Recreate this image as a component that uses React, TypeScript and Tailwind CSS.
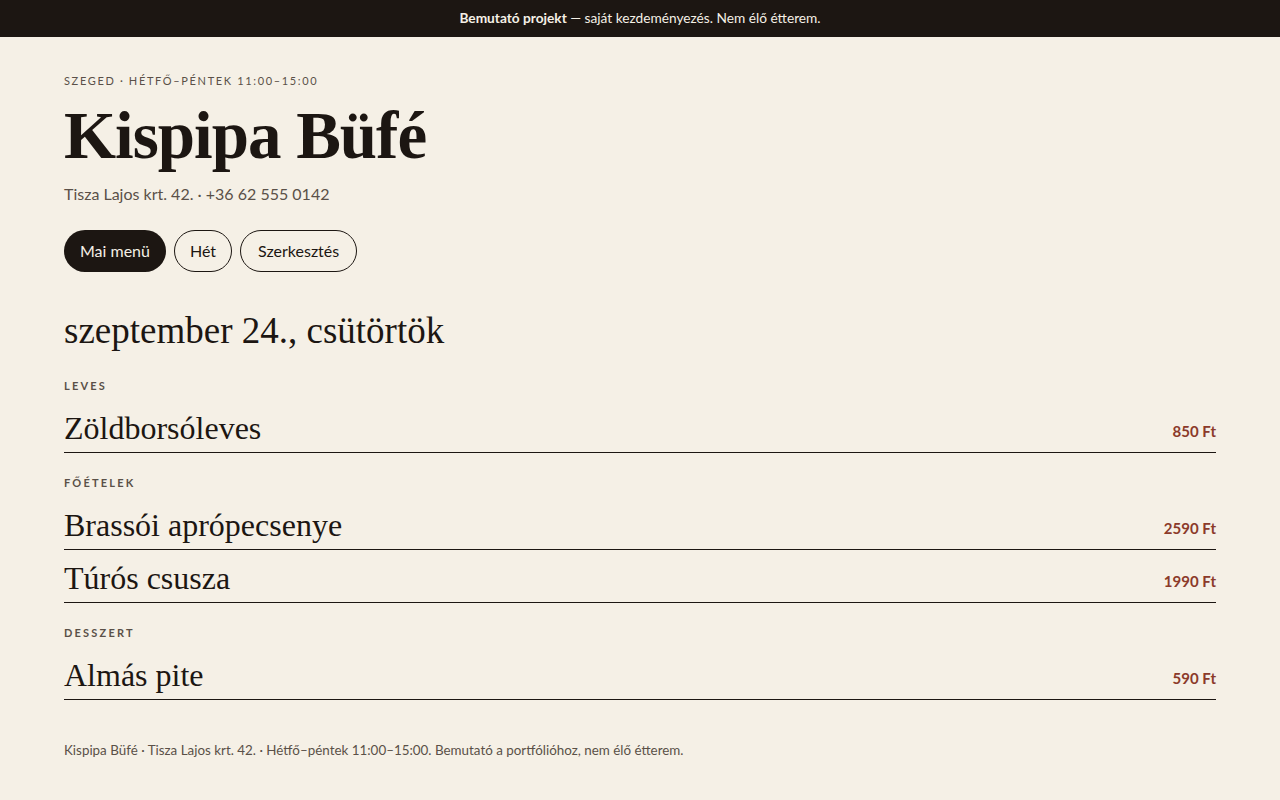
const sans = "font-['Lato','Noto_Sans',sans-serif]"
const serif = "font-['Liberation_Serif','DejaVu_Serif',serif]"

const sections = [
  { label: "Leves", items: [{ name: "Zöldborsóleves", price: "850 Ft" }] },
  {
    label: "Főételek",
    items: [
      { name: "Brassói aprópecsenye", price: "2590 Ft" },
      { name: "Túrós csusza", price: "1990 Ft" },
    ],
  },
  { label: "Desszert", items: [{ name: "Almás pite", price: "590 Ft" }] },
]

export default function App() {
  return (
    <div className={`min-h-screen bg-[#f5f0e6] text-[#1c1612] ${sans}`}>
      {/* Banner */}
      <div className="flex h-[37px] items-center justify-center bg-[#1c1612] text-[13.7px] text-[#f5f0e6]">
        <span>
          <strong className="font-bold">Bemutató projekt</strong> — saját kezdeményezés. Nem élő étterem.
        </span>
      </div>

      <main className="px-16 pt-[36px] pb-10">
        {/* Header */}
        <p className="text-[11px] uppercase tracking-[0.15em] text-[#5a5048]">
          Szeged · Hétfő–péntek 11:00–15:00
        </p>
        <h1 className={`${serif} mt-[6px] text-[67px] leading-[78px] font-bold tracking-[-0.015em]`}>
          Kispipa Büfé
        </h1>
        <p className="mt-[8px] text-[16px] text-[#5a5048]">Tisza Lajos krt. 42. · +36 62 555 0142</p>

        {/* Tabs */}
        <div className="mt-[24px] flex gap-2">
          <button className="h-[42px] rounded-full bg-[#1c1612] px-4 text-[16px] text-[#f5f0e6]">Mai menü</button>
          <button className="h-[42px] rounded-full border border-[#1c1612] px-[15px] text-[16px]">Hét</button>
          <button className="h-[42px] rounded-full border border-[#1c1612] px-[17px] text-[16px]">Szerkesztés</button>
        </div>

        {/* Day */}
        <h2 className={`${serif} mt-[38px] text-[37px] leading-[41px]`}>szeptember 24., csütörtök</h2>

        {sections.map((s, i) => (
          <section key={s.label} className={i === 0 ? "mt-[27px]" : "mt-[22px]"}>
            <h3 className="text-[11px] leading-[16px] font-bold uppercase tracking-[0.2em] text-[#5a5048]">{s.label}</h3>
            <div className="mt-[6px]">
              {s.items.map((it) => (
                <div key={it.name} className="flex items-baseline justify-between border-b border-[#1c1612] pt-[10px] pb-[6px]">
                  <span className={`${serif} text-[32px] leading-[36px]`}>{it.name}</span>
                  <span className="-translate-y-[2px] text-[15px] font-bold text-[#8b3a2a]">{it.price}</span>
                </div>
              ))}
            </div>
          </section>
        ))}

        <p className="mt-[40px] text-[13.4px] text-[#5a5048]">
          Kispipa Büfé · Tisza Lajos krt. 42. · Hétfő–péntek 11:00–15:00. Bemutató a portfólióhoz, nem élő étterem.
        </p>
      </main>
    </div>
  )
}
